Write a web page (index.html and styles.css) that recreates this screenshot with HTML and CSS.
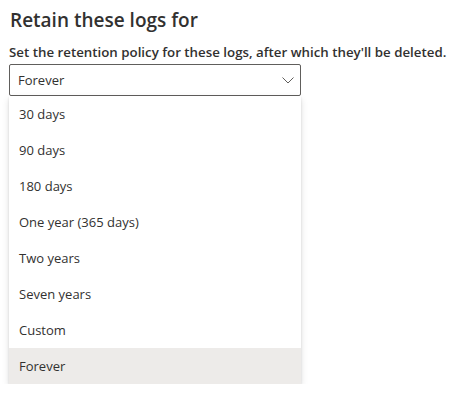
FILE: index.html
```html
<!DOCTYPE html>
<html lang="en">
<head>
  <meta charset="UTF-8">
  <meta name="viewport" content="width=device-width, initial-scale=1.0">
  <title>Retain these logs for</title>
  <link rel="stylesheet" href="styles.css">
</head>
<body>
  <div class="panel">
    <h1>Retain these logs for</h1>
    <label class="field-label">Set the retention policy for these logs, after which they'll be deleted.</label>
    <div class="dropdown">
      <div class="dropdown-title">
        <span>Forever</span>
        <svg class="chevron" width="12" height="7" viewBox="0 0 12 7">
          <path d="M0.5 0.5 L6 6 L11.5 0.5" fill="none" stroke="#605e5c" stroke-width="1"/>
        </svg>
      </div>
      <div class="dropdown-callout">
        <div class="option">30 days</div>
        <div class="option">90 days</div>
        <div class="option">180 days</div>
        <div class="option">One year (365 days)</div>
        <div class="option">Two years</div>
        <div class="option">Seven years</div>
        <div class="option">Custom</div>
        <div class="option selected">Forever</div>
      </div>
    </div>
  </div>
</body>
</html>
```

FILE: styles.css
```css
body {
  margin: 0;
  font-family: 'Open Sans', 'Noto Sans', sans-serif;
  background: #fff;
  color: #323130;
}
.panel {
  padding: 6px 9px 0 9px;
}
.panel h1 {
  margin: 0 0 0 1px;
  font-size: 19px;
  font-weight: 600;
  line-height: 28px;
  color: #323130;
}
.field-label {
  display: block;
  margin: 8px 0 0 0;
  font-size: 13.3px;
  font-weight: 600;
  line-height: 20px;
  color: #323130;
}
.dropdown {
  width: 292px;
  margin-top: 2px;
}
.dropdown-title {
  display: flex;
  align-items: center;
  justify-content: space-between;
  height: 30px;
  border: 1px solid #605e5c;
  border-radius: 2px;
  padding: 0 6px 0 8px;
  font-size: 13px;
}
.dropdown-callout {
  background: #fff;
  box-shadow: 0 3px 7px rgba(0, 0, 0, 0.13), 0 0.6px 2px rgba(0, 0, 0, 0.11);
}
.option {
  height: 36px;
  line-height: 36px;
  padding: 0 10px;
  font-size: 13px;
  color: #323130;
}
.option.selected {
  background: #edebe9;
}
```
